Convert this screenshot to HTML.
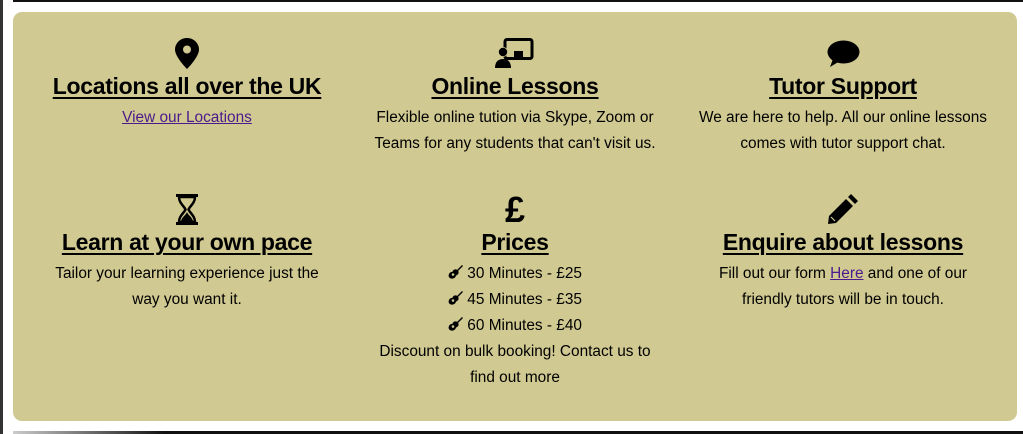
<!DOCTYPE html>
<html><head><meta charset="utf-8"><style>
html,body{margin:0;padding:0;width:1023px;height:434px;background:#fff;overflow:hidden;font-family:"Liberation Sans",sans-serif;position:relative}
.top{position:absolute;left:13px;right:0;top:0;height:2px;background:#111}
.bot{position:absolute;left:13px;right:0;top:431px;height:3px;background:linear-gradient(90deg,#ccc,#111 15%,#111)}
.left{position:absolute;left:0;top:0;width:3px;height:434px;background:#333}
.panel{position:absolute;left:13px;top:12px;width:1004px;height:409px;background:#d0c991;border-radius:9px}
.col{position:absolute;width:330px;text-align:center;color:#000}
.ic{position:absolute;left:0;right:0;display:flex;justify-content:center}
h2{position:absolute;left:0;right:0;margin:0;font-size:23px;font-weight:bold;text-decoration:underline;text-decoration-thickness:2px;text-underline-offset:3px;letter-spacing:-0.3px;line-height:24px;white-space:nowrap}
p{position:absolute;left:0;right:0;margin:0;font-size:15.4px;line-height:26px;white-space:nowrap}
a{color:#4b1a8c}
</style></head><body>
<div class="left"></div><div class="top"></div><div class="bot"></div>
<div class="panel"></div>

<div class="col" style="left:22px;top:0">
 <div class="ic" style="top:38px"><svg width="24" height="31" viewBox="0 0 24 31"><path d="M12 0C5.4 0 0 5.2 0 11.6 0 19 12 31 12 31S24 19 24 11.6C24 5.2 18.6 0 12 0z" fill="#000"/><circle cx="12" cy="11.5" r="4" fill="#d0c991"/></svg></div>
 <h2 style="top:74px">Locations all over the UK</h2>
 <p style="top:105px"><a href="#">View our Locations</a></p>
</div>

<div class="col" style="left:350px;top:0">
 <div class="ic" style="top:38px"><svg width="40" height="30" viewBox="0 0 40 30"><rect x="10" y="1.5" width="27" height="19" rx="2" fill="none" stroke="#000" stroke-width="3"/><rect x="19" y="13" width="9" height="7" fill="#000"/><circle cx="8" cy="14" r="5" fill="#d0c991"/><circle cx="8" cy="14" r="4.2" fill="#000"/><path d="M0 30c0-6 3-9 8-9s8 3 8 9z" fill="#000"/></svg></div>
 <h2 style="top:74px">Online Lessons</h2>
 <p style="top:105px">Flexible online tution via Skype, Zoom or<br>Teams for any students that can't visit us.</p>
</div>

<div class="col" style="left:678px;top:0">
 <div class="ic" style="top:40px"><svg width="33" height="28" viewBox="0 0 33 28"><ellipse cx="16.5" cy="12" rx="16" ry="11.5" fill="#000"/><path d="M6 19L3 27 13 21z" fill="#000"/></svg></div>
 <h2 style="top:74px">Tutor Support</h2>
 <p style="top:105px">We are here to help. All our online lessons<br>comes with tutor support chat.</p>
</div>

<div class="col" style="left:22px;top:0">
 <div class="ic" style="top:194px"><svg width="24" height="31" viewBox="0 0 24 31"><rect x="1" y="0" width="22" height="3" fill="#000"/><rect x="1" y="28" width="22" height="3" fill="#000"/><path d="M4 3h16c0 6-5 9-6.5 12.5C15 19 20 22 20 28H4c0-6 5-9 6.5-12.5C9 12 4 9 4 3z" fill="none" stroke="#000" stroke-width="2.5"/><path d="M6 27c1-4 5-6 6-9 1 3 5 5 6 9z" fill="#000"/></svg></div>
 <h2 style="top:230px">Learn at your own pace</h2>
 <p style="top:261px">Tailor your learning experience just the<br>way you want it.</p>
</div>

<div class="col" style="left:350px;top:0">
 <div class="ic" style="top:190px"><span style="font-size:36px;font-weight:bold;line-height:40px">£</span></div>
 <h2 style="top:230px">Prices</h2>
 <p style="top:261px">
 <svg width="15" height="14" viewBox="0 0 15 14" style="vertical-align:-1px"><path d="M14 0l1 1-5 5 .5 .5C11 8 10 10 8 10.5 7.5 13 5 14 3 13.5 1 13 0 11 1 9c.5-1.5 2-2 3.5-2.2C5 5 6.5 4 8.5 4.5L9 5z" fill="#000"/><circle cx="5" cy="9.5" r="1.3" fill="#d0c991"/></svg> 30 Minutes - £25<br>
 <svg width="15" height="14" viewBox="0 0 15 14" style="vertical-align:-1px"><path d="M14 0l1 1-5 5 .5 .5C11 8 10 10 8 10.5 7.5 13 5 14 3 13.5 1 13 0 11 1 9c.5-1.5 2-2 3.5-2.2C5 5 6.5 4 8.5 4.5L9 5z" fill="#000"/><circle cx="5" cy="9.5" r="1.3" fill="#d0c991"/></svg> 45 Minutes - £35<br>
 <svg width="15" height="14" viewBox="0 0 15 14" style="vertical-align:-1px"><path d="M14 0l1 1-5 5 .5 .5C11 8 10 10 8 10.5 7.5 13 5 14 3 13.5 1 13 0 11 1 9c.5-1.5 2-2 3.5-2.2C5 5 6.5 4 8.5 4.5L9 5z" fill="#000"/><circle cx="5" cy="9.5" r="1.3" fill="#d0c991"/></svg> 60 Minutes - £40<br>
 Discount on bulk booking! Contact us to<br>find out more</p>
</div>

<div class="col" style="left:678px;top:0">
 <div class="ic" style="top:193px"><svg width="32" height="32" viewBox="0 0 32 32"><path d="M24 1l7 7-3 3-7-7z" fill="#000"/><path d="M19 6l7 7L9 30 1 31l1-8z" fill="#000"/><path d="M4 24l4 4" stroke="#d0c991" stroke-width="1.2"/></svg></div>
 <h2 style="top:230px">Enquire about lessons</h2>
 <p style="top:261px">Fill out our form <a href="#">Here</a> and one of our<br>friendly tutors will be in touch.</p>
</div>
</body></html>
